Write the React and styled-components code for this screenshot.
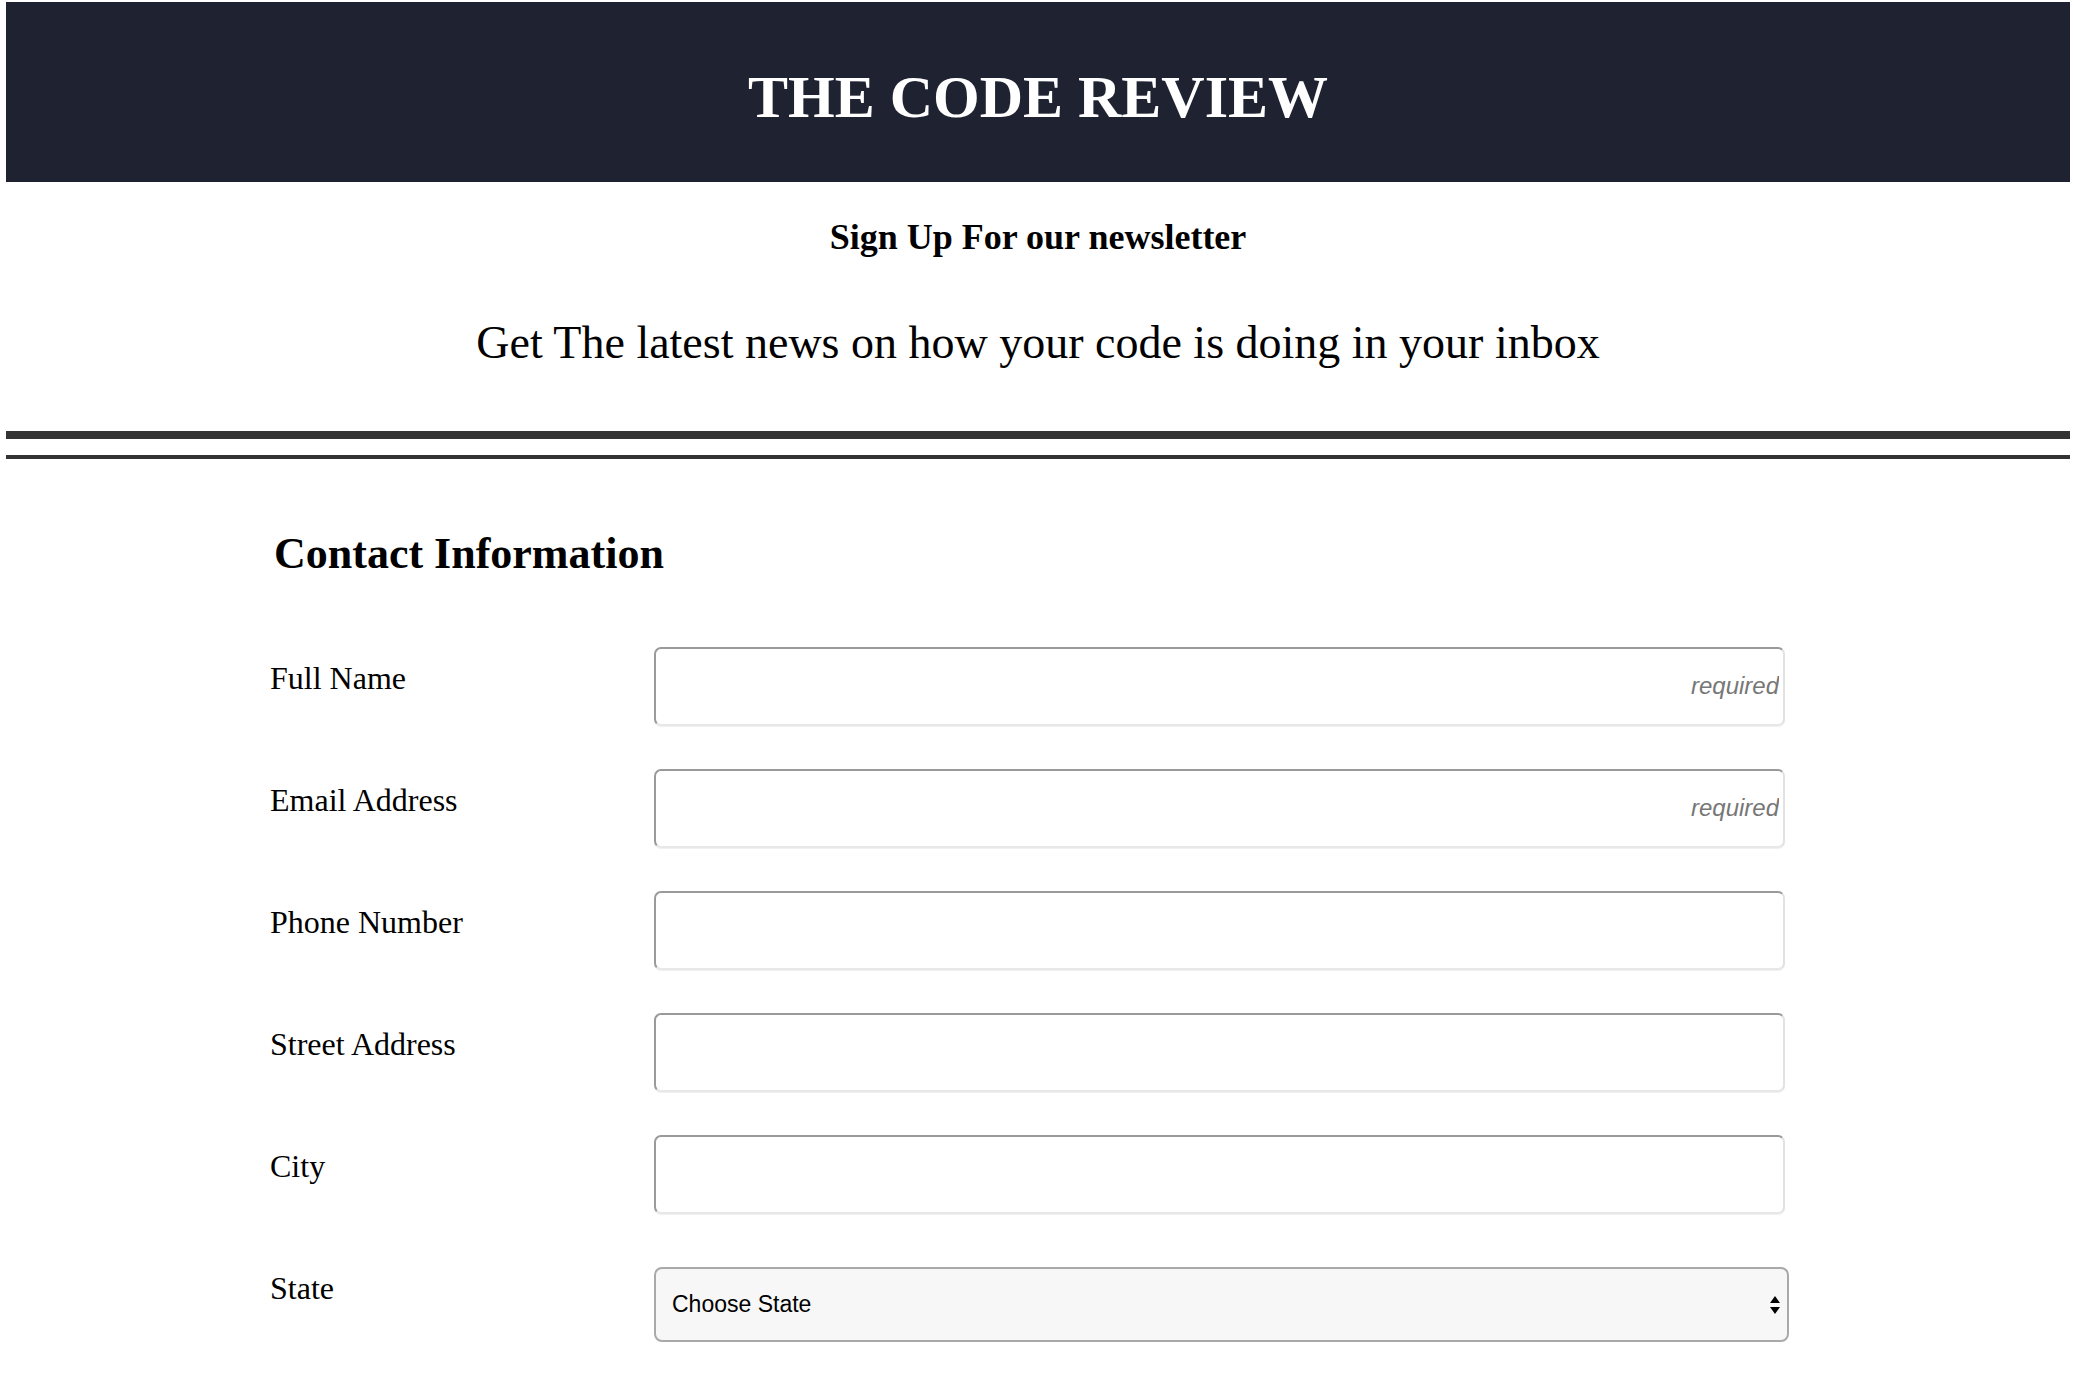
import React from 'react';
import styled, { createGlobalStyle } from 'styled-components';

const GlobalStyle = createGlobalStyle`
  html, body {
    margin: 0;
    padding: 0;
    background: #ffffff;
  }
  body {
    font-family: "Liberation Serif", "Times New Roman", serif;
    color: #000;
  }
`;

// Page wrapper (keeps the small edge gutters of the original)
const Page = styled.div`
  padding: 2px 8px 40px 6px;
`;

// Dark banner with the site title
const Masthead = styled.header`
  box-sizing: border-box;
  height: 180px;
  padding-top: 61px;
  background-color: #1f2231;
  text-align: center;
`;

const SiteTitle = styled.h1`
  margin: 0;
  font-size: 60px;
  line-height: 1.15;
  font-weight: 700;
  color: #ffffff;
`;

const Intro = styled.section`
  text-align: center;
`;

const Subheading = styled.h3`
  margin: 35px 0 0;
  font-size: 36px;
  line-height: 1.15;
  font-weight: 700;
`;

const Tagline = styled.p`
  margin: 59px 0 0;
  font-size: 46px;
  line-height: 1.15;
  font-weight: 400;
`;

// Double rule under the intro
const Divider = styled.div`
  margin-top: 61px;
  display: flex;
  flex-direction: column;
  gap: 16px;
`;

const Rule = styled.div`
  height: ${props => props.thick ? '8px' : '4px'};
  background-color: #333333;
`;

const Form = styled.form`
  margin-left: 264px;
  width: 1519px;
`;

const FormTitle = styled.h2`
  margin: 70px 0 67px;
  padding-left: 4px;
  font-size: 44px;
  line-height: 1.15;
  font-weight: 700;
`;

const Row = styled.div`
  display: grid;
  grid-template-columns: 384px 1fr;
  align-items: start;
  margin-bottom: 43px;
`;

const Label = styled.label`
  padding-top: 13px;
  font-size: 32px;
  line-height: 1.15;
`;

const TextInput = styled.input`
  box-sizing: border-box;
  width: 1131px;
  height: 79px;
  margin: 0;
  padding: 0 4px 0 12px;
  border: 2px solid;
  border-color: #9a9a9a #e2e2e2 #e8e8e8 #9a9a9a;
  border-radius: 7px;
  box-shadow: 0 1px 0 #f0f0f0;
  background: #ffffff;
  font-family: "Liberation Sans", Arial, sans-serif;
  font-size: 24px;
  text-align: ${props => props.placeholder ? 'right' : 'left'};
  outline: none;

  &::placeholder {
    color: #777777;
    font-style: italic;
  }
`;

const SelectWrap = styled.div`
  position: relative;
  width: 1135px;
  margin-top: 10px;
`;

const Select = styled.select`
  box-sizing: border-box;
  width: 100%;
  height: 75px;
  margin: 0;
  padding: 0 40px 0 16px;
  border: 2px solid #a9a9a9;
  border-radius: 8px;
  background-color: #f7f7f7;
  color: #000;
  font-family: "Liberation Sans", Arial, sans-serif;
  font-size: 23px;
  appearance: none;
  -webkit-appearance: none;
  outline: none;
`;

const SelectArrows = styled.svg`
  position: absolute;
  right: 9px;
  top: 29px;
  pointer-events: none;
`;

const fields = [
  { id: 'name', label: 'Full Name', required: true },
  { id: 'email', label: 'Email Address', required: true, type: 'email' },
  { id: 'phone', label: 'Phone Number' },
  { id: 'street', label: 'Street Address' },
  { id: 'city', label: 'City' },
];

const App = () => {
  return (
    <Page>
      <GlobalStyle />
      <Masthead>
        <SiteTitle>THE CODE REVIEW</SiteTitle>
      </Masthead>

      <Intro>
        <Subheading>Sign Up For our newsletter</Subheading>
        <Tagline>Get The latest news on how your code is doing in your inbox</Tagline>
      </Intro>

      <Divider>
        <Rule thick />
        <Rule />
      </Divider>

      <Form onSubmit={e => e.preventDefault()}>
        <FormTitle>Contact Information</FormTitle>

        {fields.map(f => (
          <Row key={f.id}>
            <Label htmlFor={f.id}>{f.label}</Label>
            <TextInput
              id={f.id}
              type={f.type || 'text'}
              placeholder={f.required ? 'required' : undefined}
              required={f.required}
            />
          </Row>
        ))}

        <Row>
          <Label htmlFor="state">State</Label>
          <SelectWrap>
            <Select id="state" defaultValue="">
              <option value="">Choose State</option>
              <option value="CA">California</option>
              <option value="NY">New York</option>
              <option value="TX">Texas</option>
            </Select>
            <SelectArrows width="10" height="18" viewBox="0 0 10 18">
              <path d="M5 0 L10 7 L0 7 Z" fill="#000" />
              <path d="M0 11 L10 11 L5 18 Z" fill="#000" />
            </SelectArrows>
          </SelectWrap>
        </Row>
      </Form>
    </Page>
  );
};

export default App;
